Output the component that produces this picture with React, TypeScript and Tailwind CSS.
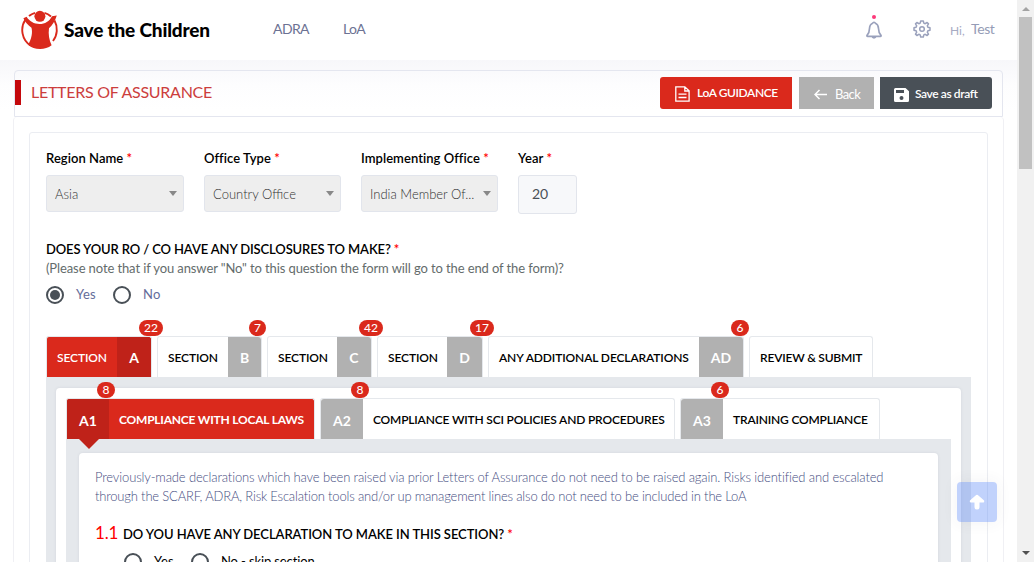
import type { ReactNode } from "react";

const Star = () => <span className="text-[#f00]">*</span>;

function Logo() {
  return (
    <svg className="h-[40px] w-[38px] shrink-0" viewBox="0 0 38 40" fill="none">
      <path d="M14 2.800Q10.500 3.800 8 6M4.500 9.500A17 18 0 0 0 9.500 35.500" stroke="#da291c" strokeWidth="1.900" />
      <path d="M23.500 2.800Q27 3.800 30 6.500M33.500 10.500A17 18 0 0 1 32 31" stroke="#da291c" strokeWidth="1.900" />
      <circle cx="18.900" cy="6.300" r="5.500" fill="#da291c" />
      <path
        d="M5.600 6.800C8.500 11.500 13 14 18.500 14c5.500 0 9.800-2.600 12.500-7.800l4.800-.8c-1.800 5.600-4.300 9.600-7.800 12.800-.9 6.200.2 11.500 2.600 17-3.300 2.600-7.200 3.800-11.500 3.800-5 0-8.600-1.200-12-4.200 3.600-6.300 4.600-12 3.400-17C7.200 15.200 4 12.300 2.400 8.200Z"
        fill="#da291c"
      />
    </svg>
  );
}

function BellIcon() {
  return (
    <svg className="h-[18px] w-[16px]" viewBox="0 0 16 18" fill="none" stroke="#9aa1bc" strokeWidth="1.700">
      <path d="M6.600 2.200a1.500 1.500 0 0 1 2.800 0C11.900 3.200 12.400 5 12.500 7.500c.1 3.400.5 4.800 2.300 6.600.5.600.3 1.300-.4 1.300H1.600c-.7 0-.9-.7-.4-1.300 1.800-1.800 2.200-3.200 2.300-6.600.1-2.500.6-4.300 3.100-5.300Z" />
      <path d="M6.300 15.500c.2 1.800 3.200 1.800 3.400 0" />
    </svg>
  );
}

function GearIcon() {
  return (
    <svg className="h-[18px] w-[18px]" viewBox="0 0 18 18" fill="none" stroke="#9aa1bc" strokeWidth="1.500" strokeLinejoin="round">
      <path d="M7.700 1h2.600l.5 2.100 1.400.6 1.900-1.200 1.400 1.400-1.200 1.900.6 1.400 2.100.5v2.600l-2.100.5-.6 1.400 1.200 1.900-1.400 1.400-1.900-1.200-1.400.6-.5 2.100H7.700l-.5-2.100-1.400-.6-1.900 1.200-1.400-1.400 1.200-1.900-.6-1.400L1 10.300V7.700l2.100-.5.6-1.400-1.200-1.900 1.400-1.400 1.900 1.200 1.400-.6Z" />
      <circle cx="9" cy="9" r="2.300" />
    </svg>
  );
}

function Select({ label, value, className }: { label: string; value: string; className: string }) {
  return (
    <div className={className}>
      <div className="h-[27px] text-[13px] font-semibold leading-[20px] tracking-[0.05px] text-black">
        {label} <Star />
      </div>
      <div className="flex h-[37px] items-center justify-between rounded-[3px] border border-[#e2e5ec] bg-[#eee] pl-[8px] pr-[6px]">
        <span className="pt-[2px] text-[13px] font-light text-[#333]">{value}</span>
        <span className="border-x-[4px] border-t-[5px] border-x-transparent border-t-[#888]" />
      </div>
    </div>
  );
}

function Radio({ checked = false }: { checked?: boolean }) {
  return (
    <span className="flex h-[18px] w-[18px] shrink-0 items-center justify-center rounded-full border-2 border-[#495057]">
      {checked && <span className="h-[10px] w-[10px] rounded-full bg-[#495057]" />}
    </span>
  );
}

function Badge({ className, children }: { className: string; children: ReactNode }) {
  return (
    <span className={`absolute top-[-17px] z-10 flex h-[16px] items-center justify-center rounded-[8px] bg-[#da291c] text-[12px] font-medium leading-none text-white ${className}`}>
      {children}
    </span>
  );
}

function SectionTab({ title, letter, count, width, letterWidth, badge, active = false }: {
  title: string; letter: string; count: number; width: string; letterWidth: string; badge: string; active?: boolean;
}) {
  return (
    <div className={`relative flex h-[41px] rounded-t-[3px] border border-b-0 border-[#e5e8ec] ${active ? "bg-[#da291c] text-white" : "bg-white text-black"} ${width}`}>
      <span className="flex flex-1 items-center pl-[10px] pt-[2px] text-[12px] font-semibold tracking-[-0.12px]">{title}</span>
      <span className={`flex items-center justify-center rounded-tr-[3px] text-[14px] font-bold text-white ${active ? "bg-[#bf2219]" : "bg-[#b1b1b1]"} ${letterWidth}`}>{letter}</span>
      <Badge className={badge}>{count}</Badge>
    </div>
  );
}

function SubTab({ title, code, count, width, active = false }: {
  title: string; code: string; count: number; width: string; active?: boolean;
}) {
  return (
    <div className={`relative flex h-[41px] rounded-t-[3px] border border-b-0 border-[#e5e8ec] ${active ? "bg-[#da291c] text-white" : "bg-white text-black"} ${width}`}>
      <span className={`flex w-[42px] items-center justify-center rounded-tl-[3px] pt-[3px] text-[14px] font-bold text-white ${active ? "bg-[#bf2219]" : "bg-[#b1b1b1]"}`}>{code}</span>
      <span className={`flex items-center whitespace-nowrap pl-[10px] pt-[2px] text-[12px] ${active ? "font-bold tracking-[-0.22px]" : "font-semibold tracking-[-0.18px]"}`}>{title}</span>
      <Badge className="left-[30px] w-[18px]">{count}</Badge>
      {active && <span className="absolute left-[12px] top-[40px] border-x-[10px] border-t-[10px] border-x-transparent border-t-[#bf2219]" />}
    </div>
  );
}

export default function App() {
  return (
    <div className="relative flex h-[562px] w-[1034px] overflow-hidden whitespace-nowrap bg-white font-['Lato',sans-serif]">
      <div className="flex h-full w-[1017px] flex-col overflow-hidden">
        <header className="flex h-[60px] shrink-0 items-center bg-white pl-[21px]">
          <Logo />
          <span className="ml-[5px] w-[209px] text-[19px] font-black tracking-[-0.17px] text-black">Save the Children</span>
          <span className="w-[70px] pb-[3px] text-[14px] tracking-[-0.6px] text-[#6c7293]">ADRA</span>
          <span className="w-[523px] pb-[3px] text-[14px] tracking-[-0.6px] text-[#6c7293]">LoA</span>
          <span className="relative w-[47px]">
            <BellIcon />
            <span className="absolute left-[6px] top-[-6px] h-[4px] w-[4px] rounded-full bg-[#fd397a]" />
          </span>
          <span className="w-[37px] pb-[3px]"><GearIcon /></span>
          <span className="w-[21px] pt-[1px] text-[12px] text-[#a7abc3]">Hi,</span>
          <span className="pb-[3px] text-[14px] tracking-[-0.4px] text-[#959cb6]">Test</span>
        </header>
        <main className="flex min-h-0 flex-1 flex-col bg-linear-to-b from-[#f7f7fa] from-0% via-[#fdfdfe] via-[5%] to-white to-10% pl-[14px] pt-[10px]">
          <div className="flex h-[47px] w-[989px] shrink-0 items-center rounded-t-[4px] border border-[#e4e6ef] pb-[2px]">
            <span className="h-[25px] w-[6px] bg-[#c4080c]" />
            <span className="ml-[10px] w-[629px] pb-[2px] text-[16px] tracking-[-0.27px] text-[#cc3d3d]">LETTERS OF ASSURANCE</span>
            <div className="flex h-[32px] w-[132px] items-center rounded-l-[3px] bg-[#da291c] pl-[15px] text-[12px] font-semibold text-white">
              <svg className="mt-[2px] h-[16px] w-[15px]" viewBox="0 0 15 16" fill="none" stroke="white" strokeWidth="1.300">
                <path d="M.8.8h9l4.300 4v10.400H.8ZM9.800.8v4.200h4.300M3.500 8.200h8M3.500 11.500h8" />
              </svg>
              <span className="ml-[7px] tracking-[-0.4px]">LoA GUIDANCE</span>
            </div>
            <div className="ml-[7px] flex h-[32px] w-[75px] items-center bg-[#b1b1b1] pl-[15px] text-[13px] text-white">
              <svg className="mt-[4px] h-[11px] w-[13px]" viewBox="0 0 13 11" fill="none" stroke="white" strokeWidth="1.500">
                <path d="M13 5.500H1M5.500 1 1 5.500 5.500 10" />
              </svg>
              <span className="ml-[8px] pt-[4px] tracking-[-0.6px]">Back</span>
            </div>
            <div className="ml-[6px] flex h-[32px] w-[112px] items-center rounded-r-[3px] bg-[#495057] pl-[14px] text-[12px] font-semibold text-white">
              <svg className="mt-[4px] h-[14px] w-[15px]" viewBox="0 0 15 14">
                <path fill="white" fillRule="evenodd" d="M1.500 0h10L15 3.300v9.200q0 1.500-1.500 1.500h-12Q0 14 0 12.500v-11Q0 0 1.500 0ZM2 2v3h8V2Zm5.500 6a2 2 0 1 0 0 4 2 2 0 0 0 0-4Z" />
              </svg>
              <span className="ml-[6px] pt-[2px] tracking-[-0.4px]">Save as draft</span>
            </div>
          </div>
          <div className="ml-[-1px] min-h-0 w-[991px] flex-1 rounded-t-[4px] border-x border-[#f0f0f4] bg-white pl-[15px] pt-[15px]">
            <div className="h-[470px] w-[959px] rounded-t-[3px] border border-[#ebedf2] px-[16px] pt-[15px]">
              <div className="flex h-[91px] gap-[20px]">
                <Select label="Region Name" value="Asia" className="w-[138px]" />
                <Select label="Office Type" value="Country Office" className="w-[137px]" />
                <Select label="Implementing Office" value="India Member Of..." className="w-[137px]" />
                <div className="w-[59px]">
                  <div className="h-[27px] text-[13px] font-semibold leading-[20px] tracking-[0.1px] text-black">Year <Star /></div>
                  <div className="flex h-[39px] items-center rounded-[3px] border border-[#e2e5ec] bg-[#f7f8fa] pb-[2px] pl-[13px] text-[14px] text-[#495057]">20</div>
                </div>
              </div>
              <div className="h-[20px] text-[13px] font-semibold leading-[20px] tracking-[-0.12px] text-black">DOES YOUR RO / CO HAVE ANY DISCLOSURES TO MAKE? <Star /></div>
              <div className="h-[19px] text-[13px] leading-[19px] tracking-[-0.105px] text-[#646c6c]">(Please note that if you answer "No" to this question the form will go to the end of the form)?</div>
              <div className="mt-[8px] flex h-[18px] items-center text-[13px] text-[#646c9a]">
                <Radio checked />
                <span className="ml-[12px] w-[37px] tracking-[0.2px]">Yes</span>
                <Radio />
                <span className="ml-[12px] tracking-[0.3px]">No</span>
              </div>
              <div className="mt-[32px] flex gap-[5px]">
                <SectionTab active title="SECTION" letter="A" count={22} width="w-[106px]" letterWidth="w-[34px]" badge="left-[92px] w-[24px]" />
                <SectionTab title="SECTION" letter="B" count={7} width="w-[105px]" letterWidth="w-[33px]" badge="left-[91px] w-[17px]" />
                <SectionTab title="SECTION" letter="C" count={42} width="w-[105px]" letterWidth="w-[34px]" badge="left-[91px] w-[24px]" />
                <SectionTab title="SECTION" letter="D" count={17} width="w-[106px]" letterWidth="w-[35px]" badge="left-[92px] w-[24px]" />
                <SectionTab title="ANY ADDITIONAL DECLARATIONS" letter="AD" count={6} width="w-[256px]" letterWidth="w-[44px]" badge="left-[242px] w-[18px]" />
                <div className="flex h-[41px] w-[124px] items-center rounded-t-[3px] border border-b-0 border-[#e5e8ec] bg-white pl-[10px] pt-[2px] text-[12px] font-semibold tracking-[-0.2px] text-black">REVIEW &amp; SUBMIT</div>
              </div>
              <div className="h-[300px] w-[925px] bg-[#e5e8ec] px-[10px] pt-[11px]">
                <div className="h-[289px] rounded-t-[4px] bg-white px-[10px] pt-[10px] shadow-[0_0_3px_rgba(80,90,120,0.12)]">
                  <div className="flex gap-[5px]">
                    <SubTab active title="COMPLIANCE WITH LOCAL LAWS" code="A1" count={8} width="w-[249px]" />
                    <SubTab title="COMPLIANCE WITH SCI POLICIES AND PROCEDURES" code="A2" count={8} width="w-[355px]" />
                    <SubTab title="TRAINING COMPLIANCE" code="A3" count={6} width="w-[200px]" />
                  </div>
                  <div className="h-[238px] bg-[#e5e8ec] px-[13px] pt-[14px]">
                    <div className="h-[224px] w-[859px] rounded-t-[4px] bg-white pl-[16px] pt-[15px] shadow-[0_0_3px_rgba(80,90,120,0.12)]">
                      <p className="text-[13px] font-light leading-[19px] tracking-[-0.135px] text-[#464e82]">
                        Previously-made declarations which have been raised via prior Letters of Assurance do not need to be raised again. Risks identified and escalated
                        <br />
                        <span className="tracking-[-0.18px]">through the SCARF, ADRA, Risk Escalation tools and/or up management lines also do not need to be included in the LoA</span>
                      </p>
                      <div className="mt-[17px] flex h-[22px] items-center">
                        <span className="w-[28px] pb-[2px] text-[17px] tracking-[-0.2px] text-[#f00]">1.1</span>
                        <span className="pt-[2px] text-[13px] font-semibold tracking-[-0.07px] text-black">DO YOU HAVE ANY DECLARATION TO MAKE IN THIS SECTION? <Star /></span>
                      </div>
                      <div className="ml-[29px] mt-[7px] flex h-[20px] items-center text-[13px] text-black">
                        <Radio />
                        <span className="ml-[12px] w-[37px] tracking-[0.2px]">Yes</span>
                        <Radio />
                        <span className="ml-[12px] tracking-[-0.12px]">No - skip section</span>
                      </div>
                    </div>
                  </div>
                </div>
              </div>
            </div>
          </div>
        </main>
      </div>
      <div className="flex h-full w-[17px] flex-col items-center justify-between bg-[#f1f1f1]">
        <div className="flex flex-col items-center">
          <span className="mt-[7px] border-x-[4px] border-b-[4px] border-x-transparent border-b-[#a3a3a3]" />
          <span className="mt-[6px] h-[152px] w-[13px] bg-[#c1c1c1]" />
        </div>
        <span className="mb-[7px] border-x-[4px] border-t-[4px] border-x-transparent border-t-[#505050]" />
      </div>
      <div className="absolute left-[957px] top-[482px] flex h-[40px] w-[40px] items-center justify-center rounded-[4px] bg-[#5d8af6]/38 shadow-[0_0_15px_1px_rgba(69,65,78,0.06)]">
        <svg className="h-[16px] w-[16px]" viewBox="0 0 16 16" fill="none" stroke="white" strokeLinecap="round" strokeLinejoin="round">
          <path d="M8 13V6" strokeWidth="5" />
          <path d="M2 7.300 8 2l6 5.300Z" fill="white" strokeWidth="2.500" />
        </svg>
      </div>
    </div>
  );
}
